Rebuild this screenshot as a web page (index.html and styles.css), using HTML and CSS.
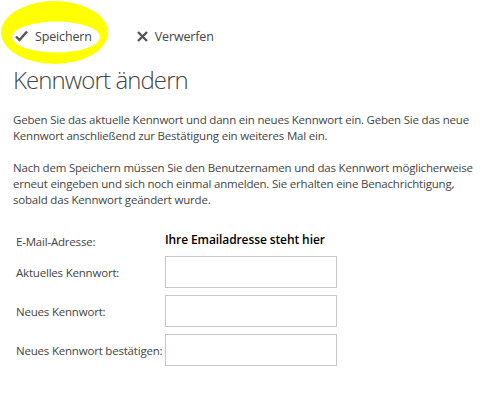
FILE: index.html
```html
<!DOCTYPE html>
<html lang="de">
<head>
<meta charset="utf-8">
<title>Kennwort ändern</title>
<link rel="stylesheet" href="styles.css">
</head>
<body>
<div class="page">
  <div class="toolbar">
    <a class="tool">
      <svg class="icon" width="13" height="12" viewBox="0 0 13 12"><path d="M1 6.5 L4.5 10 L12 1.5" fill="none" stroke="#555" stroke-width="2.4"/></svg>
      <span>Speichern</span>
    </a>
    <a class="tool">
      <svg class="icon" width="11" height="11" viewBox="0 0 11 11"><path d="M1 1 L10 10 M10 1 L1 10" fill="none" stroke="#555" stroke-width="2.4"/></svg>
      <span>Verwerfen</span>
    </a>
    <svg class="marker" width="112" height="68" viewBox="0 0 112 68"><path fill="#ffff00" fill-rule="evenodd" d="M1 32.5 A53.5 31.5 0 1 0 108 32.5 A53.5 31.5 0 1 0 1 32.5 Z M12 37 A44 15.5 0 1 1 100 37 A44 15.5 0 1 1 12 37 Z"/></svg>
  </div>
  <h1 class="title">Kennwort ändern</h1>
  <p class="text">Geben Sie das aktuelle Kennwort und dann ein neues Kennwort ein. Geben Sie das neue Kennwort anschließend zur Bestätigung ein weiteres Mal ein.</p>
  <p class="text">Nach dem Speichern müssen Sie den Benutzernamen und das Kennwort möglicherweise erneut eingeben und sich noch einmal anmelden. Sie erhalten eine Benachrichtigung, sobald das Kennwort geändert wurde.</p>
  <div class="form">
    <div class="label">E-Mail-Adresse:</div>
    <div class="value">Ihre Emailadresse steht hier</div>
    <div class="label">Aktuelles Kennwort:</div>
    <input class="field" type="password">
    <div class="label">Neues Kennwort:</div>
    <input class="field" type="password">
    <div class="label">Neues Kennwort bestätigen:</div>
    <input class="field" type="password">
  </div>
</div>
</body>
</html>
```

FILE: styles.css
```css
html, body {
  margin: 0;
  padding: 0;
  background: #fff;
}
body {
  font-family: "Open Sans", "Noto Sans", sans-serif;
  color: #444;
  font-size: 11.5px;
  letter-spacing: -0.2px;
}
.page {
  padding: 0 0 0 13px;
  width: 468px;
}
.toolbar {
  position: relative;
  display: flex;
  align-items: center;
  gap: 45px;
  padding: 26px 0 0 2px;
  height: 20px;
}
.tool {
  display: flex;
  align-items: center;
  gap: 7px;
  font-size: 12.5px;
  letter-spacing: -0.15px;
  color: #444;
}
.marker {
  position: absolute;
  left: -13px;
  top: 0;
}
.tool, .title, .text, .form { position: relative; z-index: 1; }
.title {
  margin: 18px 0 0;
  font-size: 24px;
  font-weight: 300;
  letter-spacing: -0.9px;
  line-height: 32px;
  color: #444;
}
.text {
  margin: 16px 0 0;
  line-height: 16px;
}
.form {
  display: grid;
  grid-template-columns: 149px 172px;
  row-gap: 7px;
  margin: 26px 0 0 3px;
  align-items: center;
}
.label {
  white-space: nowrap;
}
.value {
  font-weight: 600;
  font-size: 12px;
  letter-spacing: -0.1px;
  color: #000;
  margin-top: -4px;
}
.field {
  box-sizing: border-box;
  width: 172px;
  height: 32px;
  border: 1px solid #c6c6c6;
  margin: 0;
  padding: 0 4px;
  font: inherit;
}
```
